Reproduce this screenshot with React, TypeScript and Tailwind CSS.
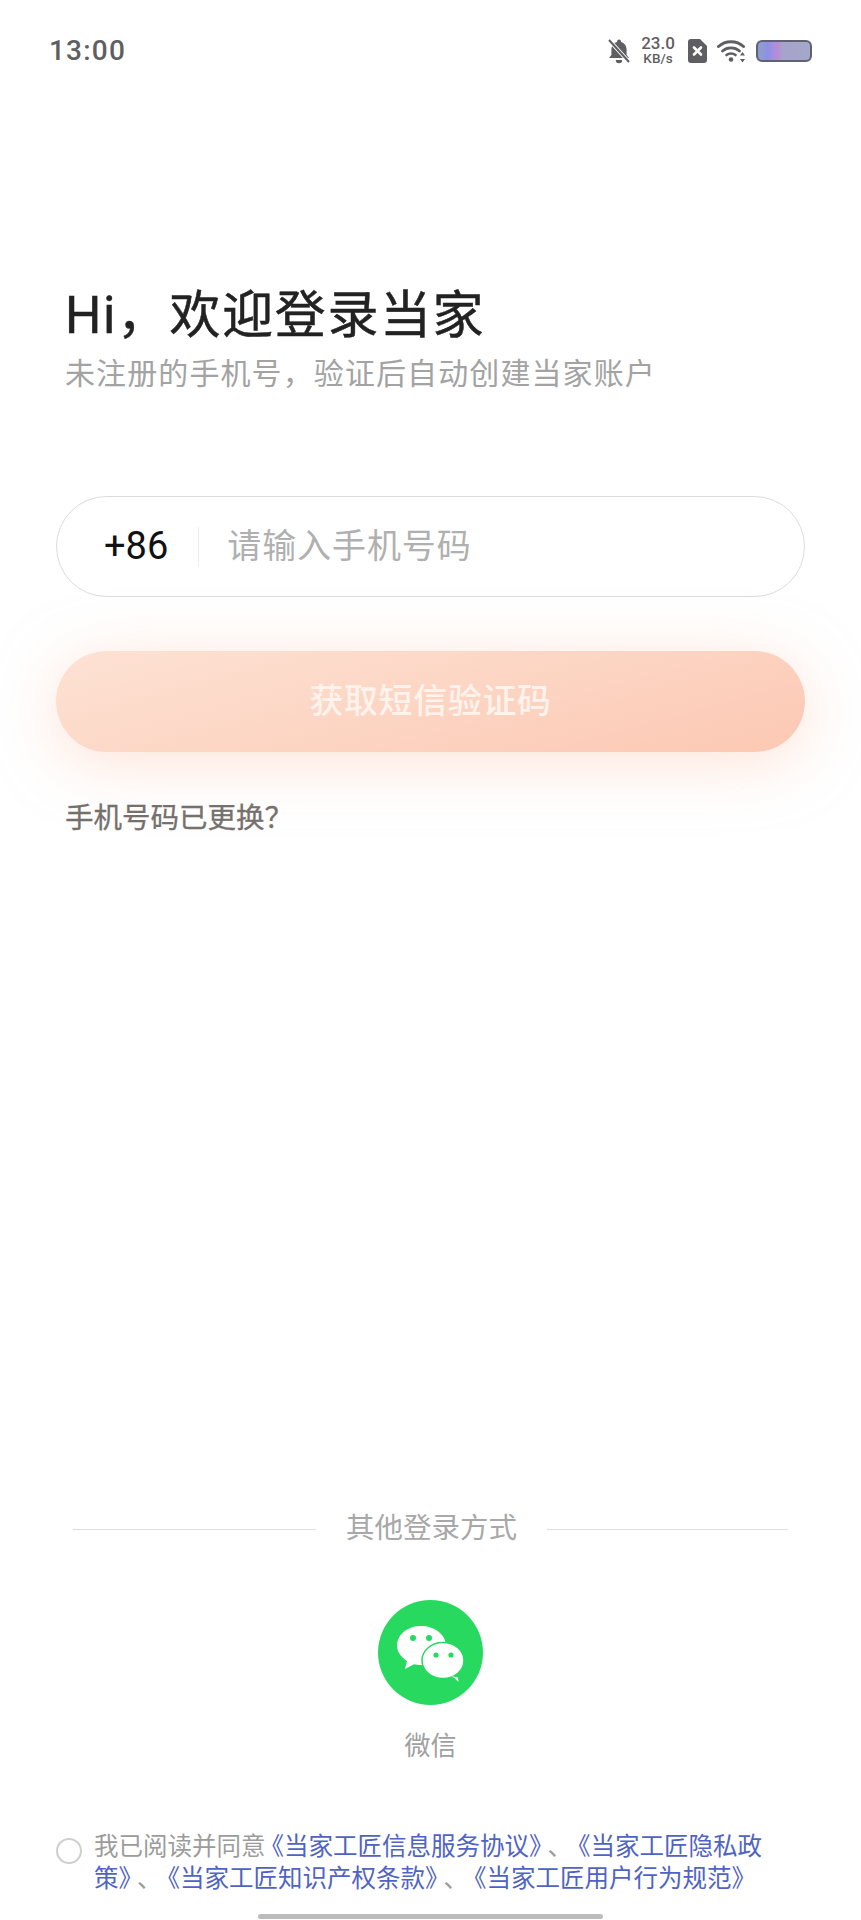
import type { ReactNode } from "react";

const FONT = "font-['Roboto','Noto_Sans_CJK_SC',sans-serif]";

function StatusBar() {
  return (
    <div className="flex h-[101px] items-center pl-[49px] pr-[49px] text-[#5f5f63]">
      <span className="text-[28px] font-medium tracking-[1.2px]">13:00</span>
      <div className="ml-auto flex items-center">
        <svg width="24" height="26" viewBox="0 0 24 26" fill="#5f5f63">
          <path d="M12 1.500a2 2 0 0 1 2 2v.6c3.600 1 5.600 4 5.600 7.900v5l2.400 3H2l2.400-3v-5c0-3.900 2-6.900 5.600-7.900v-.6a2 2 0 0 1 2-2Z" />
          <path d="M8.800 22h6.400a3.200 3.200 0 0 1-6.400 0Z" />
          <path d="M2 2l20 22" stroke="#fff" strokeWidth="4" />
          <path d="M2 2l20 22" stroke="#5f5f63" strokeWidth="2" />
        </svg>
        <div className="ml-[8px] flex w-[38px] flex-col items-center font-medium">
          <span className="text-[17px] leading-[15px]">23.0</span>
          <span className="text-[13.500px] leading-[14px]">KB/s</span>
        </div>
        <svg className="ml-[11px]" width="19" height="24" viewBox="0 0 19 24">
          <path d="M3 0h9l7 7v14a3 3 0 0 1-3 3H3a3 3 0 0 1-3-3V3a3 3 0 0 1 3-3Z" fill="#5f5f63" />
          <path d="M6 8.500l7 7M13 8.500l-7 7" stroke="#fff" strokeWidth="2.600" strokeLinecap="round" />
        </svg>
        <svg className="ml-[10px]" width="30" height="24" viewBox="0 0 30 24" fill="none" stroke="#5f5f63" strokeLinecap="round">
          <path d="M1.500 7.500c7-6.500 18-6.500 25 0" strokeWidth="3" />
          <path d="M5.500 12c4.800-4.200 12.200-4.200 17 0" strokeWidth="2.800" />
          <path d="M9.500 16c2.500-2 6.500-2 9 0" strokeWidth="2.600" />
          <circle cx="14" cy="20.500" r="2.300" fill="#5f5f63" stroke="none" />
          <path d="M25.500 13l2.500 3.500h-5ZM25.500 23.500l2.500-3.500h-5Z" fill="#5f5f63" stroke="none" />
        </svg>
        <div className="ml-[9px] h-[22px] w-[56px] overflow-hidden rounded-[6px] border-[2px] border-[#5e6274] bg-[linear-gradient(90deg,#8f9ad2_0%,#8f9ad2_10%,#8d8fe8_18%,#a88fe0_30%,#b98bd8_38%,#a6a2cc_46%,#a4a8c8_100%)]" />
      </div>
    </div>
  );
}

function WeChatIcon() {
  return (
    <svg width="105" height="105" viewBox="0 0 105 105">
      <circle cx="52.500" cy="52.500" r="52.500" fill="#27d95f" />
      <path d="M27 69l2-8C23 57 19 51.500 19 46 19 34 30 26 43 26s25 8 25 20-12 19-25 19c-2.500 0-5-.3-7-.8Z" fill="#fff" />
      <ellipse cx="65" cy="60.500" rx="21" ry="18" fill="#fff" stroke="#27d95f" strokeWidth="1.500" />
      <path d="M73 76l7 1.500 .5 4.500-4-4Z" fill="#fff" />
      <circle cx="35" cy="38" r="3" fill="#27d95f" />
      <circle cx="51" cy="38" r="3" fill="#27d95f" />
      <circle cx="58" cy="55" r="2.600" fill="#27d95f" />
      <circle cx="73" cy="55" r="2.600" fill="#27d95f" />
    </svg>
  );
}

// the book-title brackets are narrower than a full em in the original font
function Open({ children }: { children: ReactNode }) {
  return <span className="-ml-[6px] text-[#4f63c4]">《{children}</span>;
}

function Close({ children }: { children?: ReactNode }) {
  return (
    <span className="text-[#4f63c4]">
      {children}
      <span className="tracking-[-6px]">》</span>
    </span>
  );
}

export default function App() {
  return (
    <div className={`${FONT} flex h-[1920px] w-full flex-col overflow-hidden bg-white [text-spacing-trim:space-all]`}>
      <StatusBar />

      <div className="mt-[181px] pl-[65px] pr-[66px]">
        <h1 className="text-[51px] font-normal leading-[68px] tracking-[1.600px] text-[#222222] [-webkit-text-stroke:0.5px_#222222]">Hi，欢迎登录当家</h1>
        <p className="mt-[3px] text-[30px] leading-[42px] tracking-[1.100px] text-[#a3a3a3]">未注册的手机号，验证后自动创建当家账户</p>
      </div>

      <div className="mx-[56px] mt-[101px] flex h-[101px] items-center rounded-full border border-[#dcdcdc] bg-white">
        <span className="ml-[47px] text-[38px] text-[#111111]">+86</span>
        <div className="ml-[30px] h-[40px] w-px bg-[#ececec]" />
        <span className="ml-[28px] text-[34px] tracking-[0.9px] text-[#b0b0b0]">请输入手机号码</span>
      </div>

      <button
        type="button"
        className="mx-[56px] mt-[54px] flex h-[101px] items-center justify-center rounded-full bg-[linear-gradient(165deg,#fde2d4,#fcc8b3)] text-[34px] font-medium tracking-[0.6px] text-[#fff3ec] shadow-[0_10px_60px_rgba(253,200,175,0.5)]"
      >
        获取短信验证码
      </button>

      <p className="mt-[47px] pl-[65px] pr-[66px] text-[28.500px] font-normal leading-[40px] text-[#76706d] [-webkit-text-stroke:0.3px_#76706d]">手机号码已更换？</p>

      <div className="mt-auto flex items-center px-[73px]">
        <div className="h-px w-[243px] bg-[#dedede]" />
        <span className="mx-auto text-[28.500px] leading-[40px] text-[#a8a8a8]">其他登录方式</span>
        <div className="h-px w-[241px] bg-[#dedede]" />
      </div>

      <div className="mt-[51px] flex flex-col items-center">
        <WeChatIcon />
        <span className="mt-[23px] text-[26px] leading-[36px] text-[#a0a0a0]">微信</span>
      </div>

      <div className="mt-[67px] flex pl-[56px]">
        <div className="mt-[7px] h-[26px] w-[26px] shrink-0 rounded-full border-[2px] border-[#cfcfcf]" />
        <div className="ml-[12px] whitespace-nowrap text-[24.500px] leading-[32px] text-[#9c9c9c]">
          <p>
            我已阅读并同意<Open>当家工匠信息服务协议</Open><Close />、<Open>当家工匠隐私政</Open>
          </p>
          <p>
            <Close>策</Close>、<Open>当家工匠知识产权条款</Open><Close />、<Open>当家工匠用户行为规范</Open><Close />
          </p>
        </div>
      </div>

      <div className="mx-auto mb-[1px] mt-[19px] h-[5px] w-[345px] rounded-full bg-[#bcbcbc]" />
    </div>
  );
}
